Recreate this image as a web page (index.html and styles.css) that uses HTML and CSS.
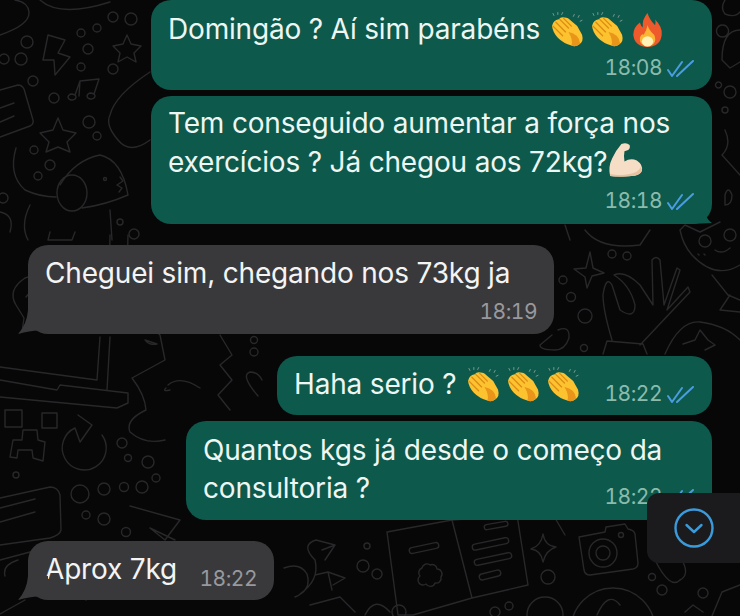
FILE: index.html
```html
<!DOCTYPE html>
<html>
<head>
	<title>Conversa</title>
	<link rel="stylesheet" href="styles.css">
</head>
<body>
	<!-- shared symbols -->
	<svg class="defs" width="0" height="0">
		<symbol id="clap" viewBox="0 0 33 36">
			<g fill="none" stroke="#7f9a94" stroke-width="1" stroke-linecap="round">
				<path d="M1 1l1 2M6 0v2M11 0l-1 2M23 2l-1 2M28 3l-1 2M31 8l-2 1"/>
			</g>
			<path d="M0 14Q1 8 7 7Q9 4 13 5Q17 5 19 8L26 14L31 23Q33 30 28 33Q24 36 20 34Q12 32 6 26Q1 21 0 14Z" fill="#fcc22f"/>
			<path d="M17 20Q28 22 29 32Q25 36 20 34Q22 28 17 20Z" fill="#e8951a"/>
			<path d="M1 14L11 24M4 10L14 20M8 7L17 16M12 6L20 14" fill="none" stroke="#dc8c14" stroke-width="1.300" stroke-linecap="round"/>
		</symbol>
		<symbol id="ticks" viewBox="0 0 28 18">
			<path d="M1 11L5 17L15 3M10 17L26 2" fill="none" stroke="#4a9de2" stroke-width="2" stroke-linecap="round" stroke-linejoin="round"/>
		</symbol>
	</svg>

	<!-- wallpaper doodles -->
	<svg class="doodles" viewBox="0 0 740 616">
		<path d="M48 35L65 40L58 53L70 57L55 75L54 60L43 60Z"/>
		<path d="M127 35L131 44L141 46L134 53L136 62L127 57L118 62L120 53L113 46L123 44Z"/>
		<path d="M58 118L63 130L76 133L67 142L70 152L58 147L46 152L49 142L40 133L53 130Z"/>
		<circle cx="27" cy="42" r="6"/><circle cx="4" cy="59" r="5"/><circle cx="21" cy="59" r="6"/><circle cx="33" cy="81" r="5"/>
		<circle cx="54" cy="98" r="5"/><circle cx="81" cy="33" r="4"/><circle cx="97" cy="28" r="4"/><circle cx="88" cy="49" r="5"/>
		<circle cx="81" cy="67" r="4"/><circle cx="113" cy="17" r="5"/><circle cx="131" cy="19" r="6"/><circle cx="113" cy="69" r="5"/>
		<circle cx="89" cy="122" r="6"/><circle cx="97" cy="136" r="4"/><circle cx="34" cy="150" r="4"/><circle cx="50" cy="165" r="5"/>
		<circle cx="38" cy="176" r="4"/><circle cx="3" cy="198" r="5"/><circle cx="134" cy="234" r="5"/>
		<path d="M75 95L80 81L99 79L94 94M80 81L79 96M75 95a4 3 0 1 1-3-1zM94 94a4 3 0 1 1-3-1z"/>
		<path d="M0 90L18 85Q22 85 24 89L33 120Q34 124 30 126L0 137M0 108L14 103M0 122L14 116"/>
		<path d="M0 35Q30 25 29 12Q28 2 15 0M40 0Q60 18 110 2"/>
		<path d="M150 72Q115 95 110 115Q105 125 118 140Q130 155 150 140"/>
		<path d="M16 148Q8 175 25 190Q40 197 56 197M60 185Q75 160 100 155Q122 160 128 195Q105 205 82 208"/>
		<ellipse cx="72" cy="193" rx="15" ry="18"/><circle cx="105" cy="179" r="1.500"/>
		<path d="M120 177l3 4-6 4 5 3-3 4M0 212Q15 215 10 232M30 205Q20 225 28 240M50 232L48 240L72 240L75 232M110 210L112 240"/>
		<!-- laptop and left column -->
		<path d="M16 305Q7 290 25 278Q45 270 58 288Q62 310 36 320L22 332L24 318ZM26 297Q36 284 48 296M33 304Q40 297 46 304"/>
		<path d="M110 337L107 390M100 337L97 380L0 367M0 380L57 390L60 385L128 393L128 403L117 408L0 397"/>
		<path d="M110 235L108 330M128 235Q125 310 160 335L165 360L132 378Q145 395 146 410Q125 420 130 432Q145 445 165 440"/>
		<path d="M145 340a10 8 0 0 0 12 4z"/>
		<path d="M220 335L232 355L220 365L232 380L218 395L230 410"/>
		<circle cx="254" cy="352" r="4"/><circle cx="254" cy="340" r="3.500"/>
		<path d="M258 396Q240 375 250 372Q258 372 262 380"/>
		<path d="M170 390Q162 392 166 388M168 385Q180 375 200 388"/>
		<rect x="5" y="410" width="17" height="17"/><rect x="42" y="413" width="15" height="15"/>
		<path d="M23 430L37 430L38 440L45 442L43 461L33 458L32 450L18 450L17 458L10 457L13 440L22 440Z"/>
		<path d="M75 428A22 22 0 1 0 102 435M78 415L92 425L80 442L75 428"/>
		<circle cx="122" cy="443" r="5"/><circle cx="128" cy="458" r="3.500"/><circle cx="148" cy="462" r="6"/>
		<circle cx="156" cy="478" r="4"/><circle cx="80" cy="494" r="9"/><circle cx="104" cy="489" r="6"/><circle cx="124" cy="487" r="4.500"/>
		<circle cx="142" cy="487" r="6"/><circle cx="86" cy="515" r="4"/><circle cx="104" cy="519" r="6"/><circle cx="126" cy="532" r="4.500"/>
		<circle cx="16" cy="475" r="3"/>
		<path d="M0 498L50 487Q58 487 60 495L61 530Q60 535 50 538L0 545M0 508L35 499M0 522L35 512"/>
		<path d="M130 506L180 520L165 540L150 528L175 540"/>
		<path d="M0 560L30 552Q45 552 60 545M5 576Q2 565 18 560M90 580L86 600M0 614L25 600"/>
		<!-- bottom row -->
		<path d="M284 568Q300 562 307 574Q312 590 295 597M316 540Q300 545 315 560Q320 580 300 594M316 540L335 545M322 550L335 545L325 560M315 575L328 572L345 578L333 585M328 572L332 590"/>
		<circle cx="363" cy="566" r="6"/><circle cx="377" cy="574" r="5"/><circle cx="367" cy="546" r="3"/>
		<path d="M310 605L340 597L355 612M365 615Q375 595 390 612"/>
		<path d="M387 532L452 520L472 598L413 615L398 615ZM452 520L517 515L528 585L472 598"/>
		<rect x="409" y="545" width="30" height="6" rx="3" transform="rotate(-12 424 548)"/>
		<rect x="472" y="541" width="37" height="6" rx="3" transform="rotate(-12 490 544)"/>
		<rect x="474" y="556" width="38" height="6" rx="3" transform="rotate(-12 493 559)"/>
		<rect x="479" y="572" width="22" height="6" rx="3" transform="rotate(-14 490 575)"/>
		<rect x="484" y="523" width="24" height="5" rx="2.500" transform="rotate(-10 496 525)"/>
		<path d="M430 565a5 5 0 0 1 7 4a5 5 0 0 1 4 8a5 5 0 0 1-6 6a5 5 0 0 1-9 1a5 5 0 0 1-6-8a5 5 0 0 1 2-8a5 5 0 0 1 8-3z"/>
		<path d="M543 534Q545 546 556 547Q546 550 543 562Q541 550 531 549Q541 546 543 534Z"/>
		<path d="M579 537L605 532L606 527L625 524L628 529Q634 530 635 534L638 563Q638 568 633 569L590 575Q585 575 584 570Z"/>
		<circle cx="603" cy="553" r="14"/><circle cx="603" cy="553" r="7"/><circle cx="621" cy="535" r="2.500"/>
		<path d="M555 518L565 535"/>
		<circle cx="548" cy="577" r="7"/><circle cx="613" cy="630" r="42"/><circle cx="545" cy="615" r="18"/>
		<circle cx="495" cy="612" r="5"/><circle cx="509" cy="606" r="4"/><circle cx="652" cy="577" r="3.500"/>
		<circle cx="662" cy="590" r="5"/><circle cx="703" cy="593" r="5"/><circle cx="399" cy="612" r="7"/>
		<path d="M597 615Q608 590 620 605M655 560Q670 590 680 580Q690 575 682 560M685 612L693 605L703 612M722 592L740 585M722 592L712 616"/>
		<!-- right column -->
		<path d="M590 252L593 268L604 273L592 276L587 288L585 277L574 269L586 268Z"/>
		<circle cx="612" cy="254" r="4"/><circle cx="627" cy="256" r="4"/><circle cx="563" cy="280" r="4"/>
		<circle cx="571" cy="297" r="4.500"/><circle cx="585" cy="316" r="7"/><circle cx="584" cy="348" r="3.500"/>
		<path d="M612 340Q603 310 603 295Q606 275 612 285L620 310Q635 320 635 305Q630 285 614 275Q625 270 640 285L653 305L652 260Q656 255 660 260L664 305L677 268L680 270L667 310L688 287L690 292L640 345M603 354L607 341L643 344L647 354"/>
		<path d="M558 330Q570 325 569 338Q565 350 555 350Q540 350 540 345M552 335L540 345"/>
		<path d="M665 354Q680 320 700 322Q725 325 740 340M683 344L695 340L700 330L708 340L715 345L705 350"/>
		<path d="M680 230Q683 245 692 255Q715 280 740 265M680 230L685 225L700 232L720 222M712 275L728 295L740 300M730 295L720 310L740 312"/>
		<circle cx="705" cy="241" r="6"/><circle cx="730" cy="235" r="6"/><path d="M715 250Q722 255 730 248M698 254l1 1M704 254l1 1"/>
		<path d="M585 230Q600 250 640 245L650 230M565 225L570 240"/>
		<path d="M725 0Q720 8 725 14Q735 18 740 12M722 25a6 6 0 1 0 1 0M740 30Q722 30 722 60L730 68L740 62M718 82a3 3 0 1 0 1 0"/>
		<circle cx="730" cy="92" r="6"/><circle cx="725" cy="110" r="3"/><path d="M725 130Q732 145 722 155L740 175M725 195Q728 185 732 195Q732 205 725 205Z"/>
		<circle cx="120" cy="222" r="3"/>
	</svg>

	<main class="chat">
		<div class="bubble sent b-first">
			<p class="msg">Domingão ? Aí sim parabéns <span class="emojis"><svg class="emoji"><use href="#clap"/></svg><svg class="emoji"><use href="#clap"/></svg><svg class="emoji fire" viewBox="0 0 32 38"><path d="M16 1Q18 8 24 14Q25 10 24 8Q32 16 31 24Q30 36 16 37Q2 36 1 24Q1 16 8 11Q9 15 11 16Q10 8 16 1Z" fill="#ee5a2b"/><path d="M16 14Q18 20 23 24Q26 30 22 34Q18 37 14 36Q7 34 8 27Q10 22 12 24Q15 20 16 14Z" fill="#fbb535"/><ellipse cx="16" cy="31" rx="6" ry="5.500" fill="#fff1b8"/></svg></span></p>
			<div class="meta"><span class="time">18:08</span><svg class="ticks"><use href="#ticks"/></svg></div>
		</div>

		<div class="bubble sent has-tail b-second">
			<p class="msg">Tem conseguido aumentar a força nos<br>exercícios ? Já chegou aos 72kg?<svg class="emoji arm" viewBox="0 0 34 34"><path d="M13 2Q18 0 21 3Q22 7 19 8L16 9Q15 14 16 19Q22 15 28 18Q34 22 33 28Q30 34 20 33Q10 34 2 33Q0 24 4 16Q7 9 13 2Z" fill="#f6dec6"/><path d="M2 31Q12 33 21 31Q29 30 32 24Q35 30 28 32Q15 35 2 33Z" fill="#e6c2a0"/></svg></p>
			<div class="meta"><span class="time">18:18</span><svg class="ticks"><use href="#ticks"/></svg></div>
		</div>

		<div class="bubble received has-tail b-third">
			<p class="msg">Cheguei sim, chegando nos 73kg ja</p>
			<div class="meta"><span class="time">18:19</span></div>
		</div>

		<div class="bubble sent inline b-fourth">
			<p class="msg">Haha serio ? <span class="emojis"><svg class="emoji"><use href="#clap"/></svg><svg class="emoji"><use href="#clap"/></svg><svg class="emoji"><use href="#clap"/></svg></span></p>
			<div class="meta"><span class="time">18:22</span><svg class="ticks"><use href="#ticks"/></svg></div>
		</div>

		<div class="bubble sent b-fifth">
			<p class="msg">Quantos kgs já desde o começo da<br>consultoria ?</p>
			<div class="meta overlap"><span class="time">18:22</span><svg class="ticks"><use href="#ticks"/></svg></div>
		</div>

		<div class="bubble received has-tail inline b-sixth">
			<p class="msg">Aprox 7kg</p>
			<div class="meta"><span class="time">18:22</span></div>
		</div>
	</main>

	<div class="scroll-btn">
		<svg width="40" height="40" viewBox="0 0 40 40"><circle cx="20" cy="20" r="18.500"/><path d="M12.500 17L20 24L27.500 17"/></svg>
	</div>
</body>
</html>
```
FILE: styles.css
```css
body {
	margin: 0;
	width: 740px;
	height: 616px;
	overflow: hidden;
	position: relative;
	background-color: #070708;
	font-family: "Inter", "Liberation Sans", sans-serif;
}

.defs {
	position: absolute;
}

.doodles {
	position: absolute;
	top: 0;
	left: 0;
	width: 740px;
	height: 616px;
	fill: none;
	stroke: #28282a;
	stroke-width: 1.4;
	stroke-linecap: round;
	stroke-linejoin: round;
}

.chat {
	position: relative;
	display: flex;
	flex-direction: column;
	align-items: flex-end;
	padding: 0 28px;
}

.bubble {
	position: relative;
	box-sizing: border-box;
	padding: 9px 17px 10px;
	border-radius: 20px;
}

.sent {
	background-color: #0d594b;
	color: #eef6f3;
}

.received {
	align-self: flex-start;
	background-color: #39393b;
	color: #f4f4f5;
}

.has-tail.sent::after,
.has-tail.received::after {
	content: "";
	position: absolute;
	bottom: 0;
	width: 30px;
	height: 24px;
	background-color: inherit;
}

.has-tail.sent::after {
	right: -10px;
	clip-path: path("M0 0L10 0Q12 18 20 23L0 24Z");
}

.has-tail.received::after {
	left: -10px;
	clip-path: path("M10 0L30 0L30 22Q20 18 0 24Q9 14 10 0Z");
}

.msg {
	margin: 0;
	font-size: 28px;
	letter-spacing: -0.18px;
	line-height: 38px;
	white-space: nowrap;
}

.emojis {
	margin-left: 4px;
}

.emoji {
	display: inline-block;
	width: 32px;
	height: 36px;
	margin-right: 8px;
	vertical-align: -9px;
	overflow: visible;
}

.fire {
	width: 31px;
	height: 36px;
	margin-right: 0;
	vertical-align: -9px;
}

.arm {
	width: 35px;
	height: 35px;
	margin: 0 0 0 1px;
	vertical-align: -5px;
}

.meta {
	display: flex;
	align-items: center;
	justify-content: flex-end;
	gap: 5px;
	height: 24px;
	margin-top: 8px;
}

.time {
	font-size: 21px;
	font-variant-numeric: tabular-nums;
	line-height: 24px;
	letter-spacing: -0.5px;
}

.sent .time {
	color: #8abbad;
}

.received .time {
	color: #98989d;
}

.ticks {
	width: 28px;
	height: 18px;
}

.inline {
	display: flex;
	justify-content: space-between;
	padding-bottom: 9px;
}

.inline .meta {
	margin-top: 17px;
}

.overlap {
	margin-top: -22px;
}

.b-first {
	width: 561px;
	padding-top: 10px;
}

.b-second {
	width: 561px;
	margin-top: 6px;
	padding-top: 8px;
	padding-bottom: 11px;
}

.b-third {
	width: 526px;
	margin-top: 21px;
}

.b-fourth {
	width: 435px;
	margin-top: 22px;
}

.b-fifth {
	width: 526px;
	margin-top: 6px;
	padding-top: 10px;
	padding-bottom: 11px;
}

.b-sixth {
	width: 246px;
	margin-top: 21px;
}

.scroll-btn {
	position: absolute;
	top: 493px;
	left: 647px;
	width: 93px;
	height: 70px;
	display: flex;
	align-items: center;
	justify-content: center;
	box-sizing: border-box;
	border-radius: 12px 0 0 12px;
	background-color: #1b1b1d;
}

.scroll-btn svg {
	fill: none;
	stroke: #3a9bdc;
	stroke-width: 2.4;
	stroke-linecap: round;
	stroke-linejoin: round;
}
```
